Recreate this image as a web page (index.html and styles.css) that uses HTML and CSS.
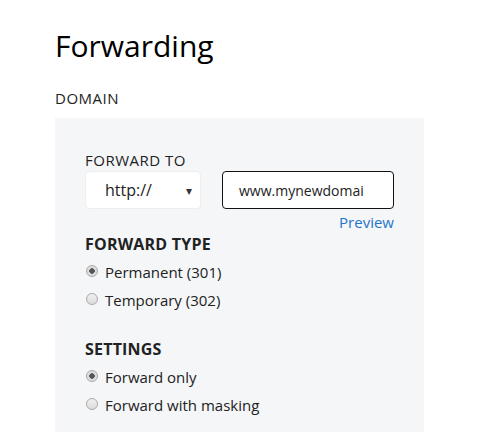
FILE: index.html
```html
<!DOCTYPE html>
<html lang="en">
<head>
  <meta charset="UTF-8" />
  <title>Forwarding</title>
  <meta name="viewport" content="width=device-width, initial-scale=1" />
  <link rel="stylesheet" href="styles.css">
</head>
<body>
  <div class="page">
    <h1>Forwarding</h1>
    <p class="label">DOMAIN</p>
    <div class="panel">
      <p class="label">FORWARD TO</p>
      <div class="forward-row">
        <div class="select">
          <span>http://</span>
          <span class="caret">&#9662;</span>
        </div>
        <div class="url-col">
          <div class="url-input">www.mynewdomai</div>
          <a class="preview" href="#">Preview</a>
        </div>
      </div>

      <h3>FORWARD TYPE</h3>
      <label class="radio"><span class="dot checked"></span>Permanent (301)</label>
      <label class="radio"><span class="dot"></span>Temporary (302)</label>

      <h3 class="settings">SETTINGS</h3>
      <label class="radio"><span class="dot checked"></span>Forward only</label>
      <label class="radio"><span class="dot"></span>Forward with masking</label>
    </div>
  </div>
</body>
</html>
```

FILE: styles.css
```css
body {
  margin: 0;
  background: #fff;
  color: #111;
  font-family: "Open Sans", "DejaVu Sans", sans-serif;
}
.page {
  padding: 26px 0 0 55px;
  width: 369px;
}
h1 {
  margin: 0;
  font-size: 30px;
  font-weight: 400;
  line-height: 40px;
  color: #000;
}
.label {
  margin: 0;
  font-size: 15px;
  letter-spacing: 0.5px;
  color: #222;
}
.page > .label {
  margin-top: 22px;
  line-height: 20px;
}
.panel {
  margin-top: 10px;
  background: #f5f6f8;
  padding: 32px 30px 20px 30px;
  min-height: 280px;
}
.panel .label {
  line-height: 20px;
}
.forward-row {
  display: flex;
  align-items: flex-start;
  gap: 21px;
  margin-top: 1px;
}
.select {
  width: 116px;
  height: 38px;
  box-sizing: border-box;
  background: #fff;
  border: 1px solid #eceef0;
  border-radius: 4px;
  display: flex;
  align-items: center;
  justify-content: space-between;
  padding: 0 8px 0 19px;
  font-size: 16px;
  color: #222;
}
.caret {
  font-size: 12px;
  color: #333;
}
.url-col {
  display: flex;
  flex-direction: column;
  align-items: flex-end;
}
.url-input {
  width: 172px;
  height: 38px;
  box-sizing: border-box;
  border: 1px solid #111;
  border-radius: 4px;
  background: #fff;
  display: flex;
  align-items: center;
  padding-left: 16px;
  font-size: 14px;
  color: #222;
  white-space: nowrap;
  overflow: hidden;
}
.preview {
  color: #1f75cb;
  text-decoration: none;
  font-size: 15px;
  line-height: 20px;
  margin-top: 3px;
}
h3 {
  margin: 2px 0 4px;
  font-size: 16px;
  font-weight: 700;
  line-height: 20px;
  color: #222;
  letter-spacing: 0.2px;
}
h3.settings {
  margin-top: 25px;
}
.radio {
  display: flex;
  align-items: center;
  gap: 7px;
  font-size: 15px;
  line-height: 28px;
  color: #222;
}
.dot {
  width: 12px;
  height: 12px;
  border-radius: 50%;
  box-sizing: border-box;
  border: 1px solid #a9a9a9;
  background: linear-gradient(#f0f0f0, #dcdcdc);
  margin-left: 1px;
  position: relative;
  top: -1px;
}
.dot.checked {
  background: radial-gradient(circle, #555 0 2.5px, #dedede 3px);
}
```
